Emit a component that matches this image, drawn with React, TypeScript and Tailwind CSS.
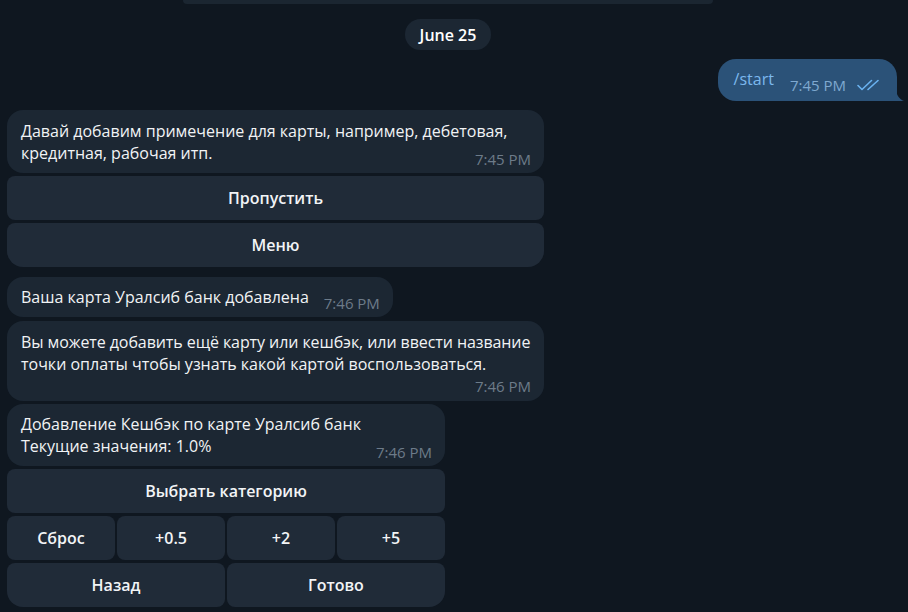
import React from "react";

const Time = ({ children, className = "" }: { children: React.ReactNode; className?: string }) => (
  <span className={"text-[15px] leading-[18px] text-[#6d7b89] whitespace-nowrap " + className}>{children}</span>
);

const Btn = ({ children, className = "" }: { children: React.ReactNode; className?: string }) => (
  <div className={"h-[44px] flex items-center justify-center bg-[#202b38] text-[16px] font-semibold text-[#f2f4f6] " + className}>
    {children}
  </div>
);

export default function App() {
  return (
    <div
      className="w-[908px] h-[612px] overflow-hidden bg-[#0f1720] text-[#f1f3f5] text-[16px] leading-[22px]"
      style={{ fontFamily: '"Open Sans", "Noto Sans", sans-serif' }}
    >
      <div className="flex flex-col">
        {/* partial top element */}
        <div className="ml-[183px] w-[530px] h-[4px] rounded-b-[14px] bg-[#1b2631]" />

        {/* date pill */}
        <div className="w-[896px] flex justify-center mt-[15px]">
          <div className="h-[31px] px-[15px] rounded-full bg-[#1c2733] flex items-center text-[16px] font-semibold text-white">
            June 25
          </div>
        </div>

        {/* outgoing */}
        <div className="flex justify-end mt-[9px] pr-[11px]">
          <div className="relative h-[42px] rounded-[18px] rounded-br-none bg-[#2b5278] pl-[16px] pr-[17px] flex items-start pt-[9px]">
            <span className="text-[#7cb8ee]">/start</span>
            <span className="ml-[16px] mt-[8px] text-[15px] leading-[18px] text-[#7fa9d0]">7:45 PM</span>
            <svg className="ml-[11px] mt-[11px]" width="23" height="12" viewBox="0 0 23 12" fill="none">
              <path d="M1 6.5 L5 10.5 L14.5 1.5" stroke="#6ab2f0" strokeWidth="1.6" strokeLinecap="round" strokeLinejoin="round" />
              <path d="M11 10.5 L21 1.5" stroke="#6ab2f0" strokeWidth="1.6" strokeLinecap="round" strokeLinejoin="round" />
            </svg>
            <svg className="absolute right-[-7px] bottom-0" width="8" height="14" viewBox="0 0 8 14">
              <path d="M0 0 C0 8 3 12 8 14 L0 14 Z" fill="#2b5278" />
            </svg>
          </div>
        </div>

        {/* bubble 1 */}
        <div className="ml-[7px] mt-[9px] w-[537px] flex flex-col gap-[3px]">
          <div className="rounded-[16px] bg-[#1c2733] pl-[14px] pr-[13px] pt-[10px] pb-[9px]">
            <div className="whitespace-nowrap">Давай добавим примечение для карты, например, дебетовая,</div>
            <div className="flex items-end justify-between">
              <span className="whitespace-nowrap">кредитная, рабочая итп.</span>
              <Time className="translate-y-[4px]">7:45 PM</Time>
            </div>
          </div>
          <Btn className="rounded-[8px]">Пропустить</Btn>
          <Btn className="rounded-[8px] rounded-b-[16px]">Меню</Btn>
        </div>

        {/* bubble 2 */}
        <div className="ml-[7px] mt-[10px] flex">
          <div className="rounded-[16px] bg-[#1c2733] pl-[14px] pr-[13px] pt-[9px] pb-[9px] flex items-end">
            <span className="whitespace-nowrap">Ваша карта Уралсиб банк добавлена</span>
            <Time className="ml-[15px] translate-y-[4px]">7:46 PM</Time>
          </div>
        </div>

        {/* bubble 3 */}
        <div className="ml-[7px] mt-[4px] w-[537px] rounded-[16px] bg-[#1c2733] pl-[14px] pr-[13px] pt-[10px] pb-[6px]">
          <div className="whitespace-nowrap tracking-[-0.08px]">Вы можете добавить ещё карту или кешбэк, или ввести название</div>
          <div className="whitespace-nowrap">точки оплаты чтобы узнать какой картой воспользоваться.</div>
          <div className="flex justify-end pt-[2px]">
            <Time>7:46 PM</Time>
          </div>
        </div>

        {/* bubble 4 */}
        <div className="ml-[7px] mt-[3px] w-[438px] flex flex-col gap-[3px]">
          <div className="rounded-[16px] bg-[#1c2733] pl-[14px] pr-[13px] pt-[9px] pb-[9px]">
            <div className="whitespace-nowrap">Добавление Кешбэк по карте Уралсиб банк</div>
            <div className="flex items-end justify-between">
              <span className="whitespace-nowrap">Текущие значения: 1.0%</span>
              <Time className="translate-y-[4px]">7:46 PM</Time>
            </div>
          </div>
          <Btn className="rounded-[8px]">Выбрать категорию</Btn>
          <div className="grid grid-cols-4 gap-[2px]">
            <Btn className="rounded-[8px]">Сброс</Btn>
            <Btn className="rounded-[8px]">+0.5</Btn>
            <Btn className="rounded-[8px]">+2</Btn>
            <Btn className="rounded-[8px]">+5</Btn>
          </div>
          <div className="grid grid-cols-2 gap-[2px]">
            <Btn className="rounded-[8px] rounded-bl-[16px]">Назад</Btn>
            <Btn className="rounded-[8px] rounded-br-[16px]">Готово</Btn>
          </div>
        </div>
      </div>
    </div>
  );
}
